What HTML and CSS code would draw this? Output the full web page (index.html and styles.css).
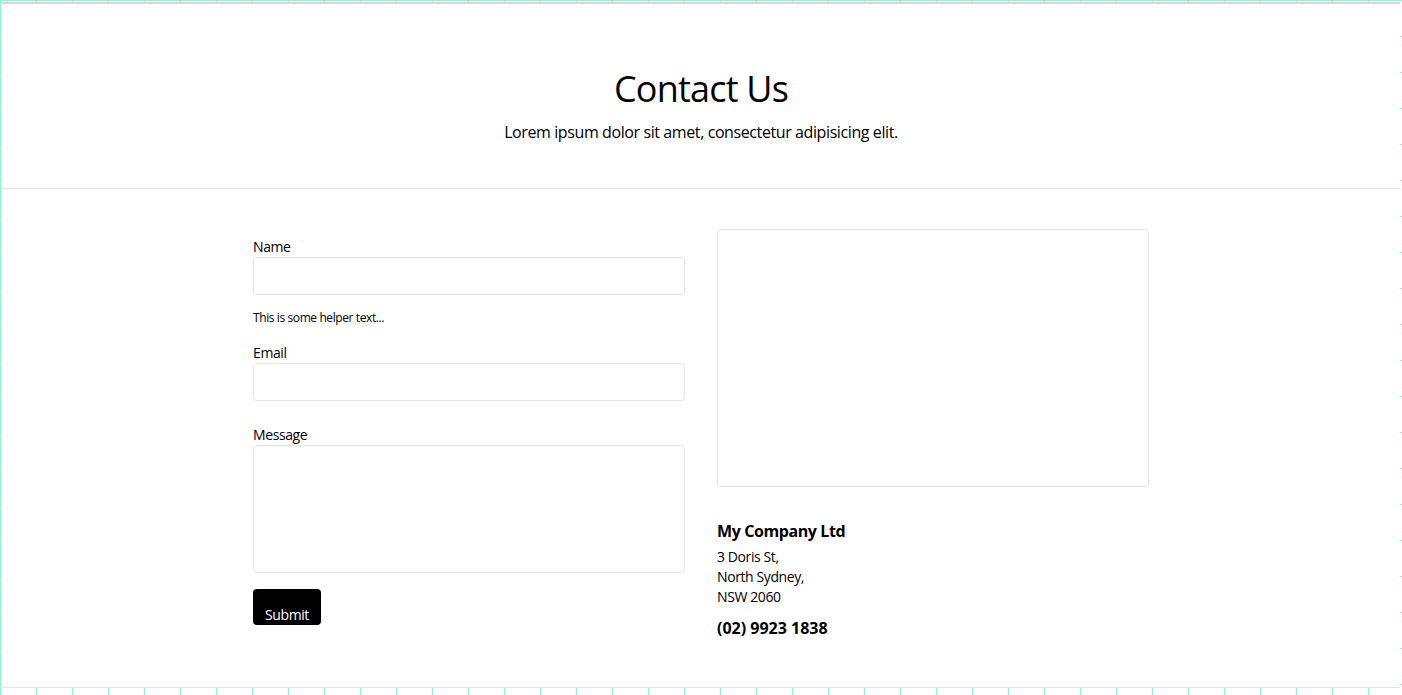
FILE: index.html
```html
<!DOCTYPE html>
<html lang="en">
<head>
<meta charset="utf-8">
<title>Contact Us</title>
<link rel="stylesheet" href="styles.css">
</head>
<body>
<div class="canvas">
  <div class="page">
    <header class="hero">
      <h1 class="hero-title">Contact Us</h1>
      <p class="hero-sub">Lorem ipsum dolor sit amet, consectetur adipisicing elit.</p>
    </header>
    <main class="content">
      <form class="form">
        <div class="field">
          <label class="label" for="name">Name</label>
          <input class="input" id="name" type="text">
          <p class="helper">This is some helper text...</p>
        </div>
        <div class="field">
          <label class="label" for="email">Email</label>
          <input class="input" id="email" type="email">
        </div>
        <div class="field field-message">
          <label class="label" for="message">Message</label>
          <textarea class="textarea" id="message"></textarea>
        </div>
        <button class="submit" type="button">Submit</button>
      </form>
      <aside class="info">
        <div class="map"></div>
        <h2 class="company">My Company Ltd</h2>
        <address class="address">3 Doris St,<br>North Sydney,<br>NSW 2060</address>
        <p class="phone">(02) 9923 1838</p>
      </aside>
    </main>
  </div>
</div>
</body>
</html>
```
FILE: styles.css
```css
* { box-sizing: border-box; }
html, body { margin: 0; padding: 0; }
body {
  font-family: "Open Sans", "Noto Sans", sans-serif;
  letter-spacing: -0.4px;
  color: #000;
  height: 695px;
  overflow: hidden;
  background-color: #fff;
  background-image:
    linear-gradient(to right, #97efd6 1px, transparent 1px),
    linear-gradient(to bottom, #97efd6 1px, transparent 1px);
  background-size: 36px 36px;
}
.canvas {
  padding: 2px 2px 0 2px;
}
.page {
  background: #fff;
  width: 1398px;
  height: 686px;
  border-top: 2px solid #d6d6dd;
  border-bottom: 1px solid #e6e6e6;
}
.hero {
  text-align: center;
  padding: 63px 0 44px;
  border-bottom: 1px solid #e5e5e5;
}
.hero-title {
  margin: 0;
  font-size: 36px;
  font-weight: 400;
  line-height: 43px;
  letter-spacing: -0.8px;
}
.hero-sub {
  margin: 10px 0 0;
  font-size: 16px;
  line-height: 24px;
}
.content {
  width: 896px;
  margin: 0 auto;
  padding-top: 40px;
  display: grid;
  grid-template-columns: 1fr 1fr;
  column-gap: 32px;
}
.form {
  display: flex;
  flex-direction: column;
  padding-top: 8px;
}
.field { display: flex; flex-direction: column; }
.field + .field { margin-top: 16px; }
.field-message { margin-top: 24px !important; }
.label {
  font-size: 14px;
  line-height: 20px;
}
.input {
  height: 38px;
  border: 1px solid #e5e5e5;
  border-radius: 4px;
  font: inherit;
  background: #fff;
}
.helper {
  margin: 14px 0 0;
  font-size: 12px;
  line-height: 18px;
}
.textarea {
  height: 128px;
  border: 1px solid #e5e5e5;
  border-radius: 4px;
  resize: none;
  font: inherit;
}
.submit {
  align-self: flex-start;
  margin-top: 16px;
  height: 36px;
  padding: 16px 12px 0;
  background: #000;
  color: #fff;
  border: 0;
  border-radius: 4px;
  font-family: inherit;
  font-size: 14px;
  line-height: 20px;
  letter-spacing: -0.4px;
}
.map {
  height: 258px;
  border: 1px solid #e5e5e5;
  border-radius: 4px;
}
.company {
  margin: 32px 0 4px;
  font-size: 16px;
  font-weight: 700;
  line-height: 24px;
}
.address {
  font-style: normal;
  font-size: 14px;
  line-height: 20px;
}
.phone {
  margin: 9px 0 0;
  font-size: 16px;
  font-weight: 700;
  line-height: 24px;
  letter-spacing: 0;
}
```
